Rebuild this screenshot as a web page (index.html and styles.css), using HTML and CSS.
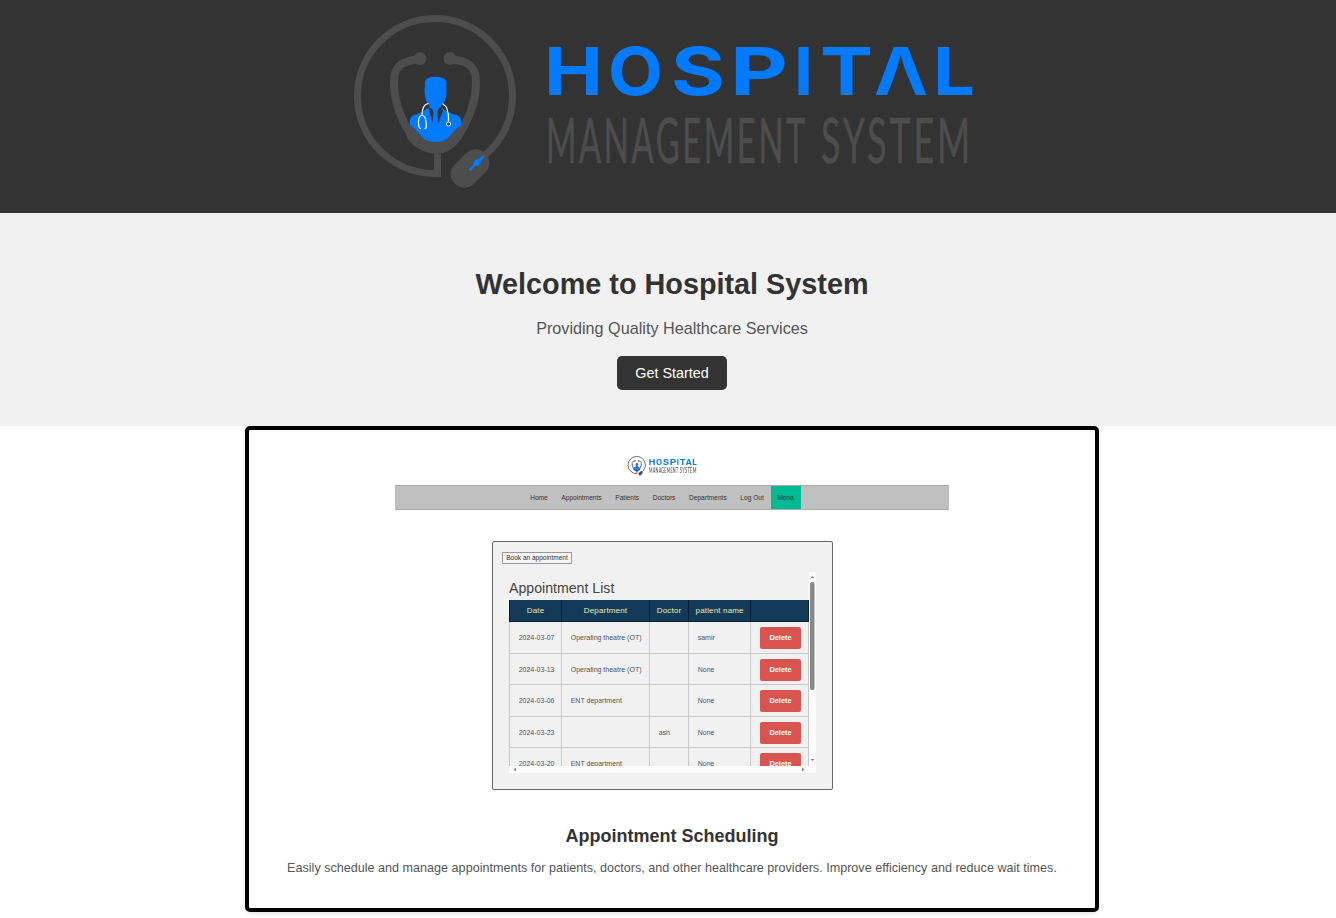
FILE: index.html
```html
<!DOCTYPE html>
<html lang="en">
<head>
<meta charset="utf-8">
<title>Hospital Management System</title>
<link rel="stylesheet" href="styles.css">
</head>
<body>
<header class="site-header">
  <svg class="logo" viewBox="340 0 650 213" width="650" height="213" role="img" aria-label="Hospital Management System">
    <defs>
      <g id="emblem">
        <g class="tube">
          <path d="M485 155C502 141 512.500 120 512.500 96A77.500 77.500 0 1 0 437.500 173.500V150" stroke-width="7"/>
          <path d="M420 59C404 61 394 64 394 82C394 105 404 125 413 137M450 59C466 61 476 64 476 82C476 105 466 125 457 137" stroke-width="8"/>
        </g>
        <g class="metal">
          <circle cx="420" cy="58.500" r="6.500"/>
          <circle cx="450" cy="58.500" r="6.500"/>
          <path d="M405 128L411 125L425 139Q435 144 446 139L460 125L465 131Q463 138 459 142Q449 154 437 154Q418 153 407 138Z"/>
          <rect x="448.500" y="155" width="43" height="27" rx="13" transform="rotate(-45 470 168.500)"/>
        </g>
        <g class="blue">
          <path d="M425 85Q424 78 431 77Q443 76 446.500 81L446.500 90Q447 100 442 105L441 107L448 112L459 116Q462 119 461 126L457 128L448 138Q444 142 435 142Q427 142 423 138L414 128L410 125Q409 119 412 116L422 112L429 107L429 105Q424.500 100 424.500 90Z"/>
          <path d="M469 169.500L473.500 164.500Q473 159.500 479 158.500L483.500 155L484.500 156.500L481 161Q481 166 475 166L470.500 171Z"/>
        </g>
        <path class="suit" d="M428 106L432.500 123L433.500 112L432 109ZM442 106L438.500 109L437.500 112L438 123L443 111Z"/>
        <path class="scope" d="M428 103.500Q422 105 422 115M420.500 128.500Q418.500 128 418.500 122Q418.500 115.500 422 115.500Q425.500 115.500 426 122Q427 128.500 425 128.500M443 104Q449 107 448.500 121"/>
        <circle class="bell" cx="448.500" cy="124" r="2"/>
      </g>
      <text id="wordmark" class="word" y="95"><tspan x="544" textLength="59" lengthAdjust="spacingAndGlyphs">H</tspan><tspan x="608" textLength="55" lengthAdjust="spacingAndGlyphs">O</tspan><tspan x="671" textLength="54" lengthAdjust="spacingAndGlyphs">S</tspan><tspan x="730" textLength="58" lengthAdjust="spacingAndGlyphs">P</tspan><tspan x="794" textLength="19" lengthAdjust="spacingAndGlyphs">I</tspan><tspan x="820" textLength="53" lengthAdjust="spacingAndGlyphs">T</tspan><tspan x="874" textLength="54" lengthAdjust="spacingAndGlyphs">A</tspan><tspan x="933" textLength="42" lengthAdjust="spacingAndGlyphs">L</tspan></text>
    </defs>
    <use href="#emblem"/>
    <use href="#wordmark"/>
    <path class="notch" d="M901 60L916 96H886.500Z"/>
    <text class="subword" y="163"><tspan x="546" textLength="262" lengthAdjust="spacingAndGlyphs">MANAGEMENT</tspan><tspan x="821" textLength="152" lengthAdjust="spacingAndGlyphs">SYSTEM</tspan></text>
  </svg>
</header>

<main>
  <section class="hero">
    <h1>Welcome to Hospital System</h1>
    <p>Providing Quality Healthcare Services</p>
    <a class="button">Get Started</a>
  </section>

  <section class="card">
    <div class="preview">
      <div class="mini-logo">
        <svg viewBox="348 8 636 184" width="71" height="21">
          <use href="#emblem"/>
          <use href="#wordmark"/>
          <text class="subword" y="163"><tspan x="546" textLength="262" lengthAdjust="spacingAndGlyphs">MANAGEMENT</tspan><tspan x="821" textLength="152" lengthAdjust="spacingAndGlyphs">SYSTEM</tspan></text>
        </svg>
      </div>
      <nav class="mini-nav">
        <span>Home</span><span>Appointments</span><span>Patients</span><span>Doctors</span><span>Departments</span><span>Log Out</span><span class="user">Mona</span>
      </nav>
      <div class="panel">
        <span class="book">Book an appointment</span>
        <div class="scroller">
          <div class="viewport">
            <h2>Appointment List</h2>
            <div class="row head"><span>Date</span><span>Department</span><span>Doctor</span><span>patient name</span><span></span></div>
            <div class="row"><span>2024-03-07</span><span>Operating theatre (OT)</span><span></span><span>samir</span><span><b>Delete</b></span></div>
            <div class="row"><span>2024-03-13</span><span>Operating theatre (OT)</span><span></span><span>None</span><span><b>Delete</b></span></div>
            <div class="row"><span>2024-03-06</span><span>ENT department</span><span></span><span>None</span><span><b>Delete</b></span></div>
            <div class="row"><span>2024-03-23</span><span></span><span>ash</span><span>None</span><span><b>Delete</b></span></div>
            <div class="row"><span>2024-03-20</span><span>ENT department</span><span></span><span>None</span><span><b>Delete</b></span></div>
          </div>
          <svg class="vbar" width="7" height="194" viewBox="0 0 7 194"><path d="M1.500 6L3.500 4L5.500 6ZM1.500 187L3.500 189L5.500 187Z"/><rect x="1" y="10" width="4.500" height="108" rx="2"/></svg>
          <svg class="hbar" width="307" height="7" viewBox="0 0 307 7"><path d="M7 1.500L4.500 3.500L7 5.500ZM293 1.500L295.500 3.500L293 5.500Z"/></svg>
        </div>
      </div>
    </div>
    <h3>Appointment Scheduling</h3>
    <p>Easily schedule and manage appointments for patients, doctors, and other healthcare providers. Improve efficiency and reduce wait times.</p>
  </section>
</main>
</body>
</html>
```
FILE: styles.css
```css
* { box-sizing: border-box; }
body { margin: 0; height: 918px; overflow: hidden; background: #fff; color: #333; font-family: "Liberation Sans", Arial, sans-serif; }
h1, h2, h3, p { margin: 0; }

.site-header { height: 213px; background: #333; padding-left: 340px; }
.logo { display: block; }
.tube { fill: none; stroke: #4d4d4d; }
.metal { fill: #4d4d4d; }
.blue { fill: #007bff; }
.suit { fill: #333; }
.scope { fill: none; stroke: #fff; stroke-width: 1.2; stroke-linecap: round; }
.bell { fill: #333; stroke: #fff; stroke-width: 1; }
.word { font: 700 66px Inter, sans-serif; fill: #007bff; }
.subword { font: 400 61px Lato, sans-serif; letter-spacing: 5px; fill: #4d4d4d; stroke: #4d4d4d; stroke-width: .6px; }
.notch { fill: #333; }

.hero { height: 213px; padding: 55px 0 0 8px; background: #f1f1f1; display: flex; flex-direction: column; align-items: center; }
.hero h1 { font-size: 28.8px; line-height: 33px; }
.hero p { margin-top: 17px; font-size: 16.2px; line-height: 20px; color: #555; }
.button { margin-top: 18px; width: 110px; height: 34px; border-radius: 5px; background: #333; color: #fff; font-size: 14.4px; line-height: 34px; text-align: center; }

.card { width: 854px; height: 486px; margin-left: 245px; border: 4px solid #000; border-radius: 5px; box-shadow: 0 2px 4px rgba(0, 0, 0, .1); display: flex; flex-direction: column; align-items: center; }
.card h3 { margin-top: 36px; font-size: 18px; line-height: 21px; }
.card p { margin-top: 13px; font-size: 12.6px; line-height: 16px; color: #555; white-space: nowrap; }

/* Scaled-down product view, slightly soft like a thumbnail */
.preview { width: 554px; height: 360px; display: flex; flex-direction: column; align-items: center; font-size: 6.6px; filter: blur(.4px); }
.mini-logo { height: 55px; }
.mini-logo svg { display: block; margin-top: 25px; margin-left: -19px; }
.mini-logo .subword { fill: #555; }
.mini-nav { width: 100%; height: 25px; display: flex; justify-content: center; padding-right: 20px; background: #c0c0c0; border: solid #aaa; border-width: 1px 0; line-height: 24px; }
.mini-nav span { padding: 0 6.8px; }
.mini-nav .user { background: #00ba93; color: #234; }

.panel { width: 341px; height: 249px; margin: 31px 0 0 -19px; padding: 10px 0 0 9px; background: #f1f1f1; border: 1px solid #666; border-radius: 2px; }
.book { display: block; width: 70px; height: 12px; border: 1px solid #999; background: #f5f5f5; font-size: 6.5px; line-height: 10px; text-align: center; white-space: nowrap; }
.scroller { display: grid; grid-template-columns: 300px 7px; grid-template-rows: 194px 7px; margin: 8px 0 0 7px; }
.viewport { overflow: hidden; }
.viewport h2 { height: 28px; font-size: 14.15px; font-weight: 400; line-height: 33px; color: #444; }
.row { width: 300px; height: 31.500px; display: grid; grid-template-columns: 53px 88px 39px 62.300px 57.700px; border-bottom: 1px solid #c8c8c8; line-height: 32px; font-size: 7px; color: #555; }
.row span { padding-left: 8.700px; border-right: 1px solid #c8c8c8; white-space: nowrap; }
.row span:first-child { border-left: 1px solid #c8c8c8; }
.row b { display: block; width: 41px; height: 22px; margin-top: 5px; border-radius: 2px; background: #d9534f; color: #fff; line-height: 21px; text-align: center; font-size: 7.4px; }
.row.head { height: 22px; background: #143a5a; border-bottom: 1px solid #0a2035; color: #e8eba5; font-size: 8px; letter-spacing: .15px; line-height: 22px; }
.row.head span { padding: 0; text-align: center; border-color: #081d30; }
.vbar, .hbar { display: block; background: #fcfcfc; fill: #888; }
.hbar { grid-column: 1 / 3; }
```
